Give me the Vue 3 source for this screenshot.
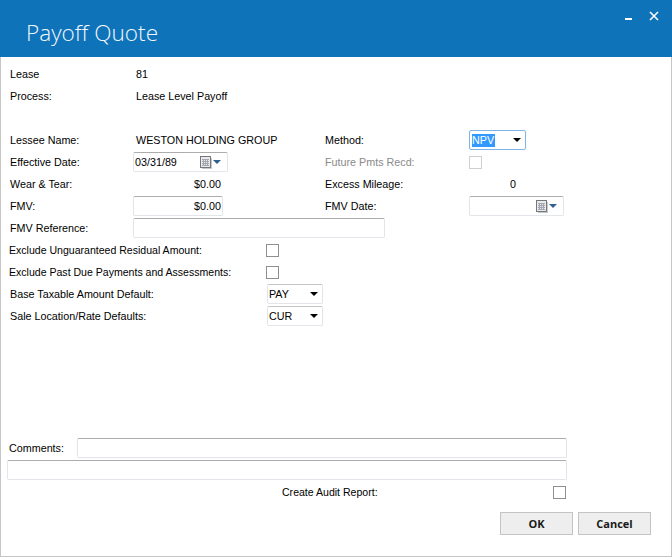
<template>
  <div class="window">
    <header class="titlebar">
      <h1 class="title">Payoff Quote</h1>
      <div class="win-controls">
        <svg class="win-min" width="7" height="2" viewBox="0 0 7 2"><rect width="7" height="2" fill="#fff" /></svg>
        <svg class="win-close" width="10" height="10" viewBox="0 0 10 10">
          <path d="M1 1l8 8M9 1l-8 8" stroke="#fff" stroke-width="1.6" fill="none" />
        </svg>
      </div>
    </header>

    <main class="body">
      <div class="row">
        <span class="label">Lease</span>
        <span class="value">81</span>
      </div>
      <div class="row">
        <span class="label">Process:</span>
        <span class="value">Lease Level Payoff</span>
      </div>

      <div class="spacer"></div>

      <div class="row">
        <span class="label">Lessee Name:</span>
        <span class="value">WESTON HOLDING GROUP</span>
        <span class="label">Method:</span>
        <div class="combo combo-focus">
          <span class="selected">NPV</span>
          <i class="arrow"></i>
        </div>
      </div>
      <div class="row">
        <span class="label">Effective Date:</span>
        <div class="field date-field">
          <span>{{ effectiveDate }}</span>
          <span class="date-btn">
            <svg width="12" height="13" viewBox="0 0 12 13">
              <rect x="2" y="2" width="10" height="11" fill="#c8c8c8" />
              <rect x="0.5" y="0.5" width="10" height="11" fill="#e9e9ec" stroke="#74777c" />
              <path d="M2 3.5h7M2 5.5h7M2 7.5h7M2 9.5h7M3.5 3v7M5.5 3v7M7.5 3v7" stroke="#a2a8b2" stroke-width="1" fill="none" />
            </svg>
            <i class="arrow arrow-blue"></i>
          </span>
        </div>
        <span class="label label-off">Future Pmts Recd:</span>
        <span class="check check-off"></span>
      </div>
      <div class="row">
        <span class="label">Wear &amp; Tear:</span>
        <span class="value amount">$0.00</span>
        <span class="label">Excess Mileage:</span>
        <span class="value mileage">0</span>
      </div>
      <div class="row">
        <span class="label">FMV:</span>
        <div class="field fmv-field">$0.00</div>
        <span class="label">FMV Date:</span>
        <div class="field date-field">
          <span></span>
          <span class="date-btn">
            <svg width="12" height="13" viewBox="0 0 12 13">
              <rect x="2" y="2" width="10" height="11" fill="#c8c8c8" />
              <rect x="0.5" y="0.5" width="10" height="11" fill="#e9e9ec" stroke="#74777c" />
              <path d="M2 3.5h7M2 5.5h7M2 7.5h7M2 9.5h7M3.5 3v7M5.5 3v7M7.5 3v7" stroke="#a2a8b2" stroke-width="1" fill="none" />
            </svg>
            <i class="arrow arrow-blue"></i>
          </span>
        </div>
      </div>
      <div class="row">
        <span class="label">FMV Reference:</span>
        <div class="field ref-field"></div>
      </div>

      <div class="row row-option">
        <span class="label label-wide">Exclude Unguaranteed Residual Amount:</span>
        <span class="check"></span>
      </div>
      <div class="row row-option">
        <span class="label label-wide">Exclude Past Due Payments and Assessments:</span>
        <span class="check"></span>
      </div>
      <div class="row row-default">
        <span class="label">Base Taxable Amount Default:</span>
        <div class="combo"><span>PAY</span><i class="arrow"></i></div>
      </div>
      <div class="row row-default">
        <span class="label">Sale Location/Rate Defaults:</span>
        <div class="combo"><span>CUR</span><i class="arrow"></i></div>
      </div>

      <div class="grow"></div>

      <div class="row row-comments">
        <span class="label">Comments:</span>
        <div class="field"></div>
      </div>
      <div class="row row-comments2">
        <div class="field"></div>
      </div>
      <div class="row row-audit">
        <span class="label">Create Audit Report:</span>
        <span class="check"></span>
      </div>

      <div class="actions">
        <button class="btn">OK</button>
        <button class="btn">Cancel</button>
      </div>
    </main>
  </div>
</template>

<script setup>
const effectiveDate = '03/31/89'
</script>

<style>
html, body { margin: 0; background: #fff; }
</style>

<style scoped>
.window {
  width: 672px;
  height: 557px;
  display: flex;
  flex-direction: column;
  font-family: "Liberation Sans", Arial, sans-serif;
  font-size: 10.75px;
  color: #000;
  background: #fff;
  overflow: hidden;
}

.titlebar {
  height: 57px;
  flex: none;
  background: #0f73ba;
  display: flex;
  justify-content: space-between;
}
.title {
  margin: 17px 0 0 26px;
  font-family: "Open Sans", sans-serif;
  font-size: 22.6px;
  line-height: 32px;
  font-weight: 300;
  color: #f2f8fc;
}
.win-controls {
  display: flex;
  align-items: flex-start;
  gap: 17px;
  padding: 11px 13px 0 0;
}
.win-min { margin-top: 7px; }

.body {
  flex: 1;
  display: flex;
  flex-direction: column;
  padding: 6px 0 21px 9px;
  border: solid #c6c6c6;
  border-width: 0 1px 1px 1px;
  min-height: 0;
}

.row {
  height: 22px;
  flex: none;
  display: grid;
  grid-template-columns: 123px 192px 144px 1fr;
  align-items: center;
}
.spacer { height: 22px; flex: none; }
.grow { flex: 1; }

.label { white-space: nowrap; }
.label-off { color: #8a8a8a; }
.label-wide { margin-left: -1px; font-size: 10.55px; }
.value { padding-left: 3px; white-space: nowrap; }
.amount { width: 88px; padding: 0; text-align: right; }
.mileage { padding-left: 41px; }

.field {
  height: 20px;
  box-sizing: border-box;
  background: #fff;
  border: 1px solid #e2e6ea;
  border-top-color: #adadad;
  border-radius: 2px;
  padding: 0 1px;
  line-height: 18px;
}
.date-field {
  width: 95px;
  display: flex;
  justify-content: space-between;
  align-items: center;
}
.fmv-field { width: 90px; text-align: right; padding-right: 1px; }
.ref-field { width: 252px; grid-column: 2 / 4; }
.date-btn {
  display: flex;
  align-items: center;
  gap: 1px;
  padding-right: 5px;
}

.combo {
  width: 57px;
  height: 20px;
  box-sizing: border-box;
  border: 1px solid #e2e6ea;
  border-top-color: #c4c4c4;
  border-radius: 2px;
  padding: 0 4px 0 1px;
  display: flex;
  justify-content: space-between;
  align-items: center;
  background: #fff;
}
.combo-focus { border-color: #7eb4ea; padding-left: 2px; }
.selected { background: #3399ff; color: #fff; line-height: 13px; padding-right: 1px; }
.arrow {
  width: 0;
  height: 0;
  border: solid transparent;
  border-width: 4px 4px 0;
  border-top-color: #000;
}
.arrow-blue { border-top-color: #2f5f8f; }

.check {
  width: 13px;
  height: 13px;
  box-sizing: border-box;
  border: 1px solid #8f8f8f;
  background: #fff;
}
.check-off { border-color: #cfcfcf; }

.row-option { grid-template-columns: 256px 1fr; }
.row-default { grid-template-columns: 257px 1fr; }
.row-default .combo { width: 56px; }

.row-comments { grid-template-columns: 67px 490px; }
.row-comments .label { margin-left: -1px; }
.row-comments2 { grid-template-columns: 560px; margin-left: -3px; }
.row-audit { grid-template-columns: 543px 13px; padding-left: 0; }
.row-audit .label { padding-left: 272px; font-size: 10.55px; }

.actions {
  display: flex;
  justify-content: flex-end;
  gap: 5px;
  margin-top: 9px;
  padding-right: 20px;
}
.btn {
  width: 73px;
  height: 23px;
  box-sizing: border-box;
  border: 1px solid #c4c4c4;
  background: #eeeeee;
  font-family: "Open Sans", sans-serif;
  font-size: 11px;
  font-weight: 700;
  color: #1a1a1a;
  padding: 0;
}
</style>
